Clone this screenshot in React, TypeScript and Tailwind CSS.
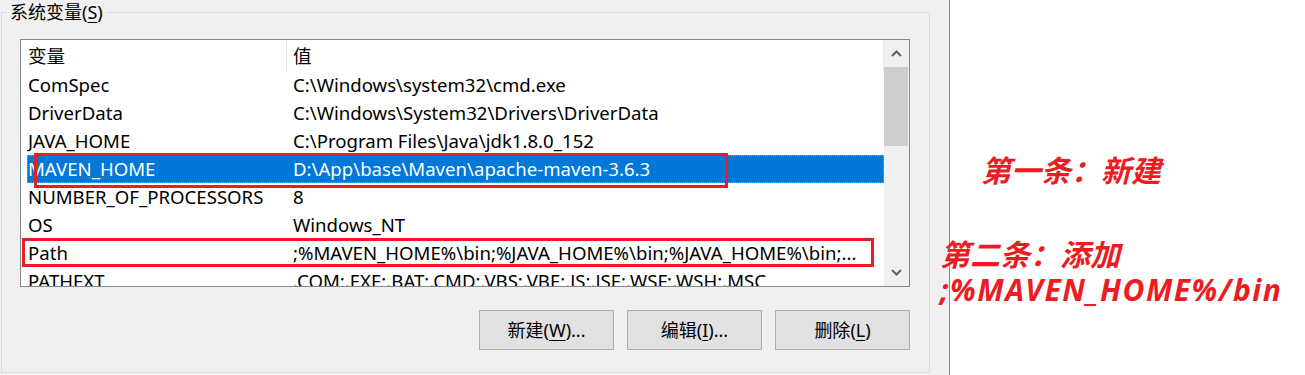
import React from 'react';

type Row = { name: string; value: string; selected?: boolean };

const rows: Row[] = [
  { name: 'ComSpec', value: 'C:\\Windows\\system32\\cmd.exe' },
  { name: 'DriverData', value: 'C:\\Windows\\System32\\Drivers\\DriverData' },
  { name: 'JAVA_HOME', value: 'C:\\Program Files\\Java\\jdk1.8.0_152' },
  { name: 'MAVEN_HOME', value: 'D:\\App\\base\\Maven\\apache-maven-3.6.3', selected: true },
  { name: 'NUMBER_OF_PROCESSORS', value: '8' },
  { name: 'OS', value: 'Windows_NT' },
  { name: 'Path', value: ';%MAVEN_HOME%\\bin;%JAVA_HOME%\\bin;%JAVA_HOME%\\bin;...' },
  { name: 'PATHEXT', value: '.COM;.EXE;.BAT;.CMD;.VBS;.VBE;.JS;.JSE;.WSF;.WSH;.MSC' },
];

const Chevron = ({ up }: { up?: boolean }) => (
  <svg width="11" height="7" viewBox="0 0 11 7">
    <path
      d={up ? 'M1 6 L5.5 1.5 L10 6' : 'M1 1 L5.5 5.5 L10 1'}
      fill="none"
      stroke="#606060"
      strokeWidth="2"
    />
  </svg>
);

const WinButton = ({ label, hotkey, tail }: { label: string; hotkey: string; tail: string }) => (
  <button className="w-[135px] h-[40px] bg-[#e1e1e1] border border-[#adadad] text-[18px] text-black leading-none">
    {label}(<span className="underline underline-offset-[3px]">{hotkey}</span>){tail}
  </button>
);

const VariableList = () => (
  <div className="relative ml-[18px] mt-[15px] w-[890px] h-[248px] border border-[#828790] bg-white flex text-[18.6px]">
    <div className="flex-1 overflow-hidden">
      <div className="h-[31px] flex items-center">
        <div className="w-[266px] h-full pl-[7px] flex items-center border-r border-[#e5e5e5]">变量</div>
        <div className="flex-1 h-full pl-[6px] flex items-center border-r border-[#e5e5e5]">值</div>
      </div>
      {rows.map(row => (
        <div key={row.name} className="h-[28px] pl-[6px] flex">
          <div
            className={`flex flex-1 items-center ${
              row.selected ? 'bg-[#0078d7] text-white outline-1 outline-dotted outline-offset-[-1px] outline-[#f08a24]' : ''
            }`}
          >
            <div className="w-[260px] pl-[1px] whitespace-nowrap overflow-hidden">{row.name}</div>
            <div className="flex-1 pl-[6px] pr-[6px] whitespace-nowrap overflow-hidden text-ellipsis">{row.value}</div>
          </div>
        </div>
      ))}
    </div>
    <div className="w-[25px] bg-[#f0f0f0] flex flex-col">
      <div className="h-[27px] flex items-center justify-center pr-[1px]">
        <Chevron up />
      </div>
      <div className="h-[79px] w-[24px] bg-[#cdcdcd]" />
      <div className="flex-1" />
      <div className="h-[27px] flex items-center justify-center pr-[1px]">
        <Chevron />
      </div>
    </div>

    {/* 标注框 */}
    <div className="absolute left-[13px] top-[113px] w-[694px] h-[35px] border-[3px] border-[#ed1c24]" />
    <div className="absolute left-[1px] top-[198px] w-[852px] h-[29px] border-[3px] border-[#ed1c24]" />
  </div>
);

export default function App() {
  return (
    <div className="w-[1305px] h-[375px] flex overflow-hidden bg-white text-black text-[18px] font-['Noto_Sans','Noto_Sans_CJK_SC',sans-serif]">
      <div className="w-[950px] h-full bg-[#f0f0f0] border-r border-[#8c8c8c] shrink-0">
        <fieldset className="ml-[1px] w-[929px] border border-[#dcdcdc] pb-[22px]">
          <legend className="ml-[5px] px-[3px] leading-[24px]">
            系统变量(<span className="underline underline-offset-[3px]">S</span>)
          </legend>
          <VariableList />
          <div className="mt-[23px] pr-[19px] flex justify-end gap-[13px]">
            <WinButton label="新建" hotkey="W" tail="..." />
            <WinButton label="编辑" hotkey="I" tail="..." />
            <WinButton label="删除" hotkey="L" tail="" />
          </div>
        </fieldset>
      </div>
      <div className="flex-1 flex flex-col pt-[156px] text-[#ed1c24] font-bold italic text-[30px] leading-[30px]">
        <div className="pl-[31px]">第一条：新建</div>
        <div className="relative ml-[-10px] mt-[54px]">第二条：添加</div>
        <div className="relative ml-[-10px] mt-[5px] tracking-[1.5px]">;%MAVEN_HOME%/bin</div>
      </div>
    </div>
  );
}
